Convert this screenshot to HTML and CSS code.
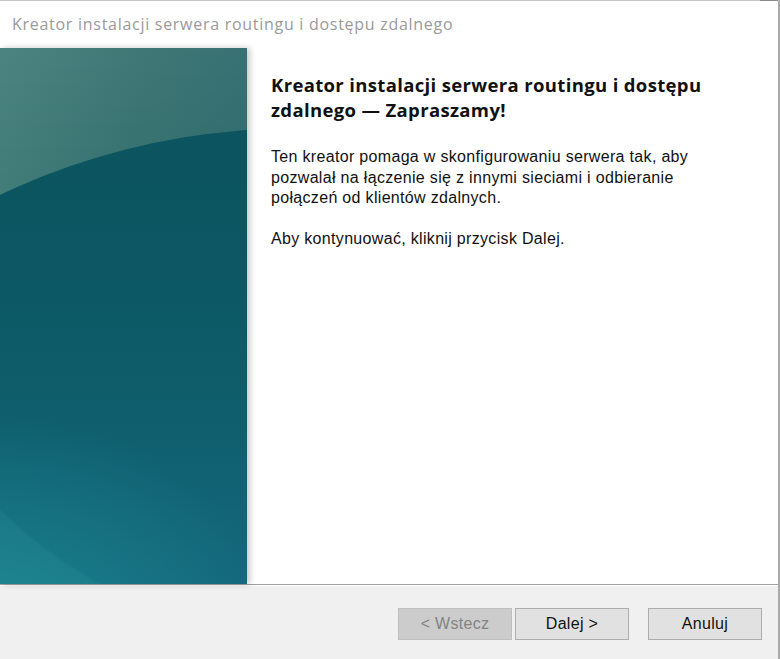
FILE: index.html
```html
<!DOCTYPE html>
<html lang="pl">
<head>
<meta charset="utf-8">
<title>Kreator instalacji serwera routingu i dostępu zdalnego</title>
<link rel="stylesheet" href="styles.css">
</head>
<body>
<div class="window">
  <div class="titlebar">
    <span class="title">Kreator instalacji serwera routingu i dostępu zdalnego</span>
    <span class="topmark"></span>
  </div>
  <div class="main">
    <div class="banner">
      <div class="arc"></div>
    </div>
    <div class="content">
      <h1 class="heading">Kreator instalacji serwera routingu i dostępu zdalnego — Zapraszamy!</h1>
      <p class="text">Ten kreator pomaga w skonfigurowaniu serwera tak, aby pozwalał na łączenie się z innymi sieciami i odbieranie połączeń od klientów zdalnych.</p>
      <p class="text">Aby kontynuować, kliknij przycisk Dalej.</p>
    </div>
  </div>
  <div class="footer">
    <button class="btn btn-disabled" disabled>&lt; Wstecz</button>
    <button class="btn btn-next">Dalej &gt;</button>
    <button class="btn btn-cancel">Anuluj</button>
  </div>
</div>
</body>
</html>
```
FILE: styles.css
```css
* { box-sizing: border-box; }
html, body { margin: 0; padding: 0; background: #ffffff; }
body { width: 780px; height: 659px; overflow: hidden; }

.window {
  width: 780px;
  height: 659px;
  display: flex;
  flex-direction: column;
  border-top: 1px solid #c4c4c4;
  border-right: 2px solid #a9a9a9;
  background: #ffffff;
}

.titlebar {
  position: relative;
  height: 47px;
  flex: none;
  display: flex;
  align-items: center;
  padding-left: 12px;
  padding-bottom: 1px;
  font-family: "Open Sans", "Noto Sans", sans-serif;
  font-size: 16px;
  letter-spacing: 0.72px;
  color: #9a9a9a;
}
.topmark {
  position: absolute;
  top: -1px;
  right: 0;
  width: 18px;
  height: 1px;
  background: #8a8a8a;
}

.main {
  flex: none;
  height: 537px;
  display: flex;
  border-bottom: 1px solid #a0a0a0;
}

.banner {
  position: relative;
  width: 247px;
  flex: none;
  overflow: hidden;
  background:
    linear-gradient(180deg, rgba(255,255,255,0.04) 0, rgba(255,255,255,0) 140px),
    linear-gradient(100deg, #447f7c 0%, #36716f 45%, #2b676d 100%);
  box-shadow: 3px 0 6px rgba(0,0,0,0.22);
  z-index: 1;
}
.arc {
  position: absolute;
  left: -300px;
  top: 80px;
  width: 1200px;
  height: 1000px;
  border-radius: 50%;
  background:
    radial-gradient(circle 477px at 630px 40px, rgba(60,165,170,0) 99.3%, rgba(60,165,170,0.14) 100%),
    radial-gradient(ellipse 280px 220px at 290px 505px, rgba(28,140,148,0.75), rgba(28,140,148,0) 100%),
    linear-gradient(to left, rgba(22,105,127,0.35) 0, rgba(22,105,127,0) 560px),
    linear-gradient(to bottom, #0b5460 0px, #0c5763 140px, #0f5f6e 300px, #136679 420px, #15697e 503px, #15697e 1000px);
}

.content {
  flex: 1;
  padding: 24px 58px 0 24px;
  color: #000000;
}
.heading {
  margin: 0 -28px 25px 0;
  font-family: "Open Sans", "Noto Sans", sans-serif;
  font-weight: 700;
  font-size: 18.5px;
  line-height: 25px;
  letter-spacing: 0.35px;
  color: #111111;
}
.text {
  margin: 0 0 20px 0;
  font-family: "Liberation Sans", Arial, sans-serif;
  font-size: 16px;
  line-height: 20.5px;
  letter-spacing: 0.32px;
  color: #111111;
}

.footer {
  flex: 1;
  background: #f0f0f0;
  border-top: 1px solid #ffffff;
  display: flex;
  align-items: flex-start;
  justify-content: flex-end;
  padding: 22px 16px 0 0;
}
.btn {
  width: 114px;
  height: 32px;
  margin: 0;
  padding: 0;
  background: #e1e1e1;
  border: 1px solid #adadad;
  border-radius: 0;
  font-family: "Liberation Sans", Arial, sans-serif;
  font-size: 16px;
  letter-spacing: 0.3px;
  color: #111111;
}
.btn-disabled {
  background: #cccccc;
  border-color: #bfbfbf;
  color: #838383;
}
.btn-next { margin-left: 3px; }
.btn-cancel { margin-left: 19px; }
```
